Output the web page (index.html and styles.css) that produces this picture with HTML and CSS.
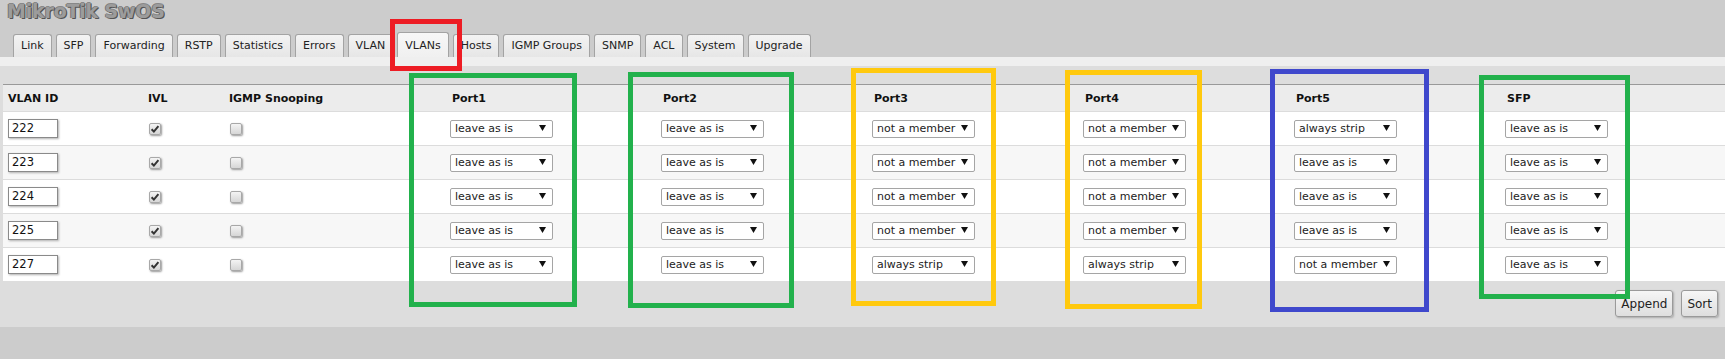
FILE: index.html
```html
<!DOCTYPE html>
<html>
<head>
<meta charset="utf-8">
<title>MikroTik SwOS - VLANs</title>
<link rel="stylesheet" href="styles.css">
</head>
<body>
<div class="page">
  <div class="title">MikroTik SwOS</div>
  <div class="tabs">
    <span class="tab">Link</span>
    <span class="tab">SFP</span>
    <span class="tab">Forwarding</span>
    <span class="tab">RSTP</span>
    <span class="tab">Statistics</span>
    <span class="tab">Errors</span>
    <span class="tab">VLAN</span>
    <span class="tab active">VLANs</span>
    <span class="tab">Hosts</span>
    <span class="tab">IGMP Groups</span>
    <span class="tab">SNMP</span>
    <span class="tab">ACL</span>
    <span class="tab">System</span>
    <span class="tab">Upgrade</span>
  </div>
  <div class="strip"></div>
  <div class="panel">
    <table class="vlans">
      <colgroup>
        <col class="c-id"><col class="c-ivl"><col class="c-igmp">
        <col class="c-port"><col class="c-port"><col class="c-port"><col class="c-port"><col class="c-port"><col>
      </colgroup>
      <thead>
        <tr><th>VLAN ID</th><th>IVL</th><th>IGMP Snooping</th><th>Port1</th><th>Port2</th><th>Port3</th><th>Port4</th><th>Port5</th><th>SFP</th></tr>
      </thead>
      <tbody>
        <tr>
          <td><span class="inp">222</span></td>
          <td><span class="cb on"><svg viewBox="0 0 12 12" width="12" height="12"><path d="M2.6 6.2 L4.9 8.6 L9.4 3.2" fill="none" stroke="#333" stroke-width="2"/></svg></span></td>
          <td><span class="cb"></span></td>
          <td><span class="sel"><span>leave as is</span><svg class="arr" viewBox="0 0 7 6" width="7" height="6"><path d="M0 0 H7 L3.5 6 Z" fill="#111"/></svg></span></td>
          <td><span class="sel"><span>leave as is</span><svg class="arr" viewBox="0 0 7 6" width="7" height="6"><path d="M0 0 H7 L3.5 6 Z" fill="#111"/></svg></span></td>
          <td><span class="sel"><span>not a member</span><svg class="arr" viewBox="0 0 7 6" width="7" height="6"><path d="M0 0 H7 L3.5 6 Z" fill="#111"/></svg></span></td>
          <td><span class="sel"><span>not a member</span><svg class="arr" viewBox="0 0 7 6" width="7" height="6"><path d="M0 0 H7 L3.5 6 Z" fill="#111"/></svg></span></td>
          <td><span class="sel"><span>always strip</span><svg class="arr" viewBox="0 0 7 6" width="7" height="6"><path d="M0 0 H7 L3.5 6 Z" fill="#111"/></svg></span></td>
          <td><span class="sel"><span>leave as is</span><svg class="arr" viewBox="0 0 7 6" width="7" height="6"><path d="M0 0 H7 L3.5 6 Z" fill="#111"/></svg></span></td>
        </tr>
        <tr>
          <td><span class="inp">223</span></td>
          <td><span class="cb on"><svg viewBox="0 0 12 12" width="12" height="12"><path d="M2.6 6.2 L4.9 8.6 L9.4 3.2" fill="none" stroke="#333" stroke-width="2"/></svg></span></td>
          <td><span class="cb"></span></td>
          <td><span class="sel"><span>leave as is</span><svg class="arr" viewBox="0 0 7 6" width="7" height="6"><path d="M0 0 H7 L3.5 6 Z" fill="#111"/></svg></span></td>
          <td><span class="sel"><span>leave as is</span><svg class="arr" viewBox="0 0 7 6" width="7" height="6"><path d="M0 0 H7 L3.5 6 Z" fill="#111"/></svg></span></td>
          <td><span class="sel"><span>not a member</span><svg class="arr" viewBox="0 0 7 6" width="7" height="6"><path d="M0 0 H7 L3.5 6 Z" fill="#111"/></svg></span></td>
          <td><span class="sel"><span>not a member</span><svg class="arr" viewBox="0 0 7 6" width="7" height="6"><path d="M0 0 H7 L3.5 6 Z" fill="#111"/></svg></span></td>
          <td><span class="sel"><span>leave as is</span><svg class="arr" viewBox="0 0 7 6" width="7" height="6"><path d="M0 0 H7 L3.5 6 Z" fill="#111"/></svg></span></td>
          <td><span class="sel"><span>leave as is</span><svg class="arr" viewBox="0 0 7 6" width="7" height="6"><path d="M0 0 H7 L3.5 6 Z" fill="#111"/></svg></span></td>
        </tr>
        <tr>
          <td><span class="inp">224</span></td>
          <td><span class="cb on"><svg viewBox="0 0 12 12" width="12" height="12"><path d="M2.6 6.2 L4.9 8.6 L9.4 3.2" fill="none" stroke="#333" stroke-width="2"/></svg></span></td>
          <td><span class="cb"></span></td>
          <td><span class="sel"><span>leave as is</span><svg class="arr" viewBox="0 0 7 6" width="7" height="6"><path d="M0 0 H7 L3.5 6 Z" fill="#111"/></svg></span></td>
          <td><span class="sel"><span>leave as is</span><svg class="arr" viewBox="0 0 7 6" width="7" height="6"><path d="M0 0 H7 L3.5 6 Z" fill="#111"/></svg></span></td>
          <td><span class="sel"><span>not a member</span><svg class="arr" viewBox="0 0 7 6" width="7" height="6"><path d="M0 0 H7 L3.5 6 Z" fill="#111"/></svg></span></td>
          <td><span class="sel"><span>not a member</span><svg class="arr" viewBox="0 0 7 6" width="7" height="6"><path d="M0 0 H7 L3.5 6 Z" fill="#111"/></svg></span></td>
          <td><span class="sel"><span>leave as is</span><svg class="arr" viewBox="0 0 7 6" width="7" height="6"><path d="M0 0 H7 L3.5 6 Z" fill="#111"/></svg></span></td>
          <td><span class="sel"><span>leave as is</span><svg class="arr" viewBox="0 0 7 6" width="7" height="6"><path d="M0 0 H7 L3.5 6 Z" fill="#111"/></svg></span></td>
        </tr>
        <tr>
          <td><span class="inp">225</span></td>
          <td><span class="cb on"><svg viewBox="0 0 12 12" width="12" height="12"><path d="M2.6 6.2 L4.9 8.6 L9.4 3.2" fill="none" stroke="#333" stroke-width="2"/></svg></span></td>
          <td><span class="cb"></span></td>
          <td><span class="sel"><span>leave as is</span><svg class="arr" viewBox="0 0 7 6" width="7" height="6"><path d="M0 0 H7 L3.5 6 Z" fill="#111"/></svg></span></td>
          <td><span class="sel"><span>leave as is</span><svg class="arr" viewBox="0 0 7 6" width="7" height="6"><path d="M0 0 H7 L3.5 6 Z" fill="#111"/></svg></span></td>
          <td><span class="sel"><span>not a member</span><svg class="arr" viewBox="0 0 7 6" width="7" height="6"><path d="M0 0 H7 L3.5 6 Z" fill="#111"/></svg></span></td>
          <td><span class="sel"><span>not a member</span><svg class="arr" viewBox="0 0 7 6" width="7" height="6"><path d="M0 0 H7 L3.5 6 Z" fill="#111"/></svg></span></td>
          <td><span class="sel"><span>leave as is</span><svg class="arr" viewBox="0 0 7 6" width="7" height="6"><path d="M0 0 H7 L3.5 6 Z" fill="#111"/></svg></span></td>
          <td><span class="sel"><span>leave as is</span><svg class="arr" viewBox="0 0 7 6" width="7" height="6"><path d="M0 0 H7 L3.5 6 Z" fill="#111"/></svg></span></td>
        </tr>
        <tr>
          <td><span class="inp">227</span></td>
          <td><span class="cb on"><svg viewBox="0 0 12 12" width="12" height="12"><path d="M2.6 6.2 L4.9 8.6 L9.4 3.2" fill="none" stroke="#333" stroke-width="2"/></svg></span></td>
          <td><span class="cb"></span></td>
          <td><span class="sel"><span>leave as is</span><svg class="arr" viewBox="0 0 7 6" width="7" height="6"><path d="M0 0 H7 L3.5 6 Z" fill="#111"/></svg></span></td>
          <td><span class="sel"><span>leave as is</span><svg class="arr" viewBox="0 0 7 6" width="7" height="6"><path d="M0 0 H7 L3.5 6 Z" fill="#111"/></svg></span></td>
          <td><span class="sel"><span>always strip</span><svg class="arr" viewBox="0 0 7 6" width="7" height="6"><path d="M0 0 H7 L3.5 6 Z" fill="#111"/></svg></span></td>
          <td><span class="sel"><span>always strip</span><svg class="arr" viewBox="0 0 7 6" width="7" height="6"><path d="M0 0 H7 L3.5 6 Z" fill="#111"/></svg></span></td>
          <td><span class="sel"><span>not a member</span><svg class="arr" viewBox="0 0 7 6" width="7" height="6"><path d="M0 0 H7 L3.5 6 Z" fill="#111"/></svg></span></td>
          <td><span class="sel"><span>leave as is</span><svg class="arr" viewBox="0 0 7 6" width="7" height="6"><path d="M0 0 H7 L3.5 6 Z" fill="#111"/></svg></span></td>
        </tr>
      </tbody>
    </table>
    <div class="actions">
      <button class="btn">Append</button>
      <button class="btn">Sort</button>
    </div>
  </div>

  <div class="mark red m-vlans"></div>
  <div class="mark green m-p1"></div>
  <div class="mark green m-p2"></div>
  <div class="mark yellow m-p3"></div>
  <div class="mark yellow m-p4"></div>
  <div class="mark blue m-p5"></div>
  <div class="mark green m-sfp"></div>
</div>
</body>
</html>
```

FILE: styles.css
```css
* { box-sizing: border-box; }
html, body {
  margin: 0;
  padding: 0;
  background: #cccccc;
}
body {
  font-family: "DejaVu Sans", Verdana, sans-serif;
  font-size: 11px;
  color: #222;
  overflow: hidden;
}
.page {
  position: relative;
  width: 1725px;
  height: 359px;
}
.title {
  height: 32px;
  padding-left: 7px;
  font-size: 19px;
  font-weight: bold;
  line-height: 22px;
  letter-spacing: -0.2px;
  color: #9c9c9c;
  text-shadow: 1px 1px 0 #555, -1px 0 0 #777, 0 -1px 0 #888, 1px 0 0 #666;
}
.tabs {
  display: flex;
  align-items: flex-end;
  gap: 4px;
  height: 25px;
  padding-left: 13px;
}
.tab {
  height: 23px;
  padding: 0 7px;
  line-height: 22px;
  border: 1px solid #a3a3a3;
  border-bottom: none;
  border-radius: 3px 3px 0 0;
  background: linear-gradient(#f3f3f3, #e6e6e6);
  color: #222;
  white-space: nowrap;
}
.tab.active {
  height: 25px;
  line-height: 25px;
  background: linear-gradient(#f7f7f7, #f0f0f0);
}
.strip {
  height: 9px;
  background: #efefef;
}
.panel {
  background: #dddddd;
  padding: 18px 0 0 3px;
  height: 261px;
}
.vlans {
  width: 1722px;
  table-layout: fixed;
  border-collapse: separate;
  border-spacing: 0;
}
.c-id { width: 140px; }
.c-ivl { width: 81px; }
.c-igmp { width: 223px; }
.c-port { width: 211px; }
.vlans th {
  height: 27px;
  padding: 0 5px;
  text-align: left;
  font-weight: bold;
  color: #111;
  background: #ececec;
  border-top: 1px solid #999;
  vertical-align: middle;
}
.vlans td {
  height: 34px;
  padding: 0 5px;
  border-top: 1px solid #dcdcdc;
  background: #fff;
  vertical-align: middle;
}
.vlans tbody tr:nth-child(even) td { background: #f7f7f7; }
.inp {
  display: block;
  width: 50px;
  height: 19px;
  padding-left: 3px;
  line-height: 17px;
  font-size: 11.5px;
  color: #111;
  background: #fff;
  border: 1px solid #8a8a8a;
  box-shadow: 1px 1px 2px #b0b0b0;
}
.cb {
  display: block;
  width: 12px;
  height: 12px;
  margin-left: 1px;
  border: 1px solid #a8a8a8;
  border-radius: 2px;
  background: linear-gradient(#f4f4f4, #d6d6d6);
  box-shadow: 1px 1px 2px #999;
}
.cb svg {
  display: block;
  margin: -1px 0 0 -1px;
}
.sel {
  display: flex;
  align-items: flex-start;
  justify-content: space-between;
  width: 103px;
  height: 18px;
  margin-left: -2px;
  padding: 0 6px 0 4px;
  background: #fff;
  border: 1px solid #a5a5a5;
  border-radius: 2px;
  color: #222;
  line-height: 16px;
  white-space: nowrap;
}
.sel .arr {
  flex: none;
  margin-top: 4px;
}
.actions {
  display: flex;
  justify-content: flex-end;
  gap: 8px;
  padding: 9px 7px 0 0;
}
.btn {
  height: 27px;
  padding: 0 5px;
  font-family: "DejaVu Sans", Verdana, sans-serif;
  font-size: 12px;
  color: #222;
  background: linear-gradient(#f6f6f6, #dedede);
  border: 1px solid #9a9a9a;
  border-radius: 3px;
  box-shadow: 1px 1px 2px #aaa;
}
.mark {
  position: absolute;
  border: 5px solid;
}
.red { border-color: #ed1c24; }
.green { border-color: #22b14c; }
.yellow { border-color: #ffc90e; }
.blue { border-color: #3f48cc; }
.m-vlans { left: 390px; top: 19px; width: 72px; height: 52px; }
.m-p1 { left: 409px; top: 73px; width: 168px; height: 234px; }
.m-p2 { left: 628px; top: 72px; width: 166px; height: 236px; }
.m-p3 { left: 851px; top: 68px; width: 145px; height: 238px; }
.m-p4 { left: 1065px; top: 70px; width: 137px; height: 239px; }
.m-p5 { left: 1270px; top: 69px; width: 159px; height: 243px; }
.m-sfp { left: 1479px; top: 75px; width: 151px; height: 224px; }
```
